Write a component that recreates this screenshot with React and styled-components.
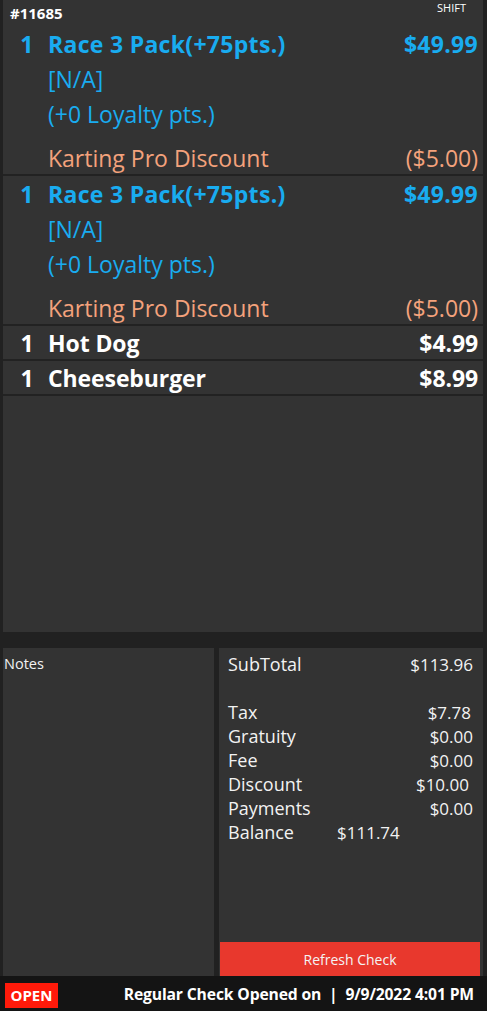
import React from "react";
import styled, { createGlobalStyle } from "styled-components";

const Global = createGlobalStyle`
  html, body { margin: 0; padding: 0; background: #212121; }
  body { font-family: "Open Sans", "Noto Sans", sans-serif; }
  * { box-sizing: border-box; }
`;

const Page = styled.div`
  width: 487px;
  height: 1011px;
  display: flex;
  flex-direction: column;
  background: #212121;
  overflow: hidden;
`;

const TicketPanel = styled.div`
  height: 632px;
  margin: 0 4px 0 3px;
  background: #333333;
  display: flex;
  flex-direction: column;
`;

const Header = styled.div`
  height: 26px;
  display: flex;
  justify-content: space-between;
  align-items: flex-start;
  padding: 0 17px 0 7px;
  color: #ffffff;
`;

const CheckNo = styled.div`
  font-weight: 700;
  font-size: 15px;
  line-height: 15px;
  margin-top: 6px;
`;

const Shift = styled.div`
  font-size: 11px;
  line-height: 11px;
  margin-top: 2px;
`;

const Item = styled.div`
  border-bottom: 2px solid #222222;
  display: flex;
  flex-direction: column;
`;

const Line = styled.div`
  height: ${(p) => p.$h || 35}px;
  display: grid;
  grid-template-columns: 45px 1fr auto;
  align-items: center;
  padding-right: 5px;
  color: ${(p) => p.$color};
  font-size: 23px;
  font-weight: ${(p) => (p.$bold ? 700 : 400)};
  letter-spacing: ${(p) => p.$ls || 0}px;
  margin-top: ${(p) => p.$mt || 0}px;
  white-space: nowrap;
`;

const Qty = styled.span`
  text-align: center;
  padding-left: 3px;
`;

const Price = styled.span`
  text-align: right;
`;

const Bottom = styled.div`
  display: flex;
  gap: 5px;
  margin: 16px 4px 0 3px;
  height: 328px;
`;

const Notes = styled.div`
  width: 211px;
  background: #333333;
  color: #f2f2f2;
  font-size: 14.5px;
  padding: 6px 1px;
`;

const Summary = styled.div`
  flex: 1;
  background: #333333;
  display: flex;
  flex-direction: column;
  color: #f2f2f2;
`;

const SumRows = styled.div`
  flex: 1;
  padding: 4px 10px 0 9px;
`;

const SumRow = styled.div`
  display: flex;
  align-items: center;
  height: 24px;
  margin-bottom: ${(p) => p.$mb || 0}px;
`;

const SumLabel = styled.span`
  font-size: 18px;
  width: ${(p) => (p.$narrow ? "109px" : "auto")};
  flex: ${(p) => (p.$narrow ? "none" : "1")};
`;

const SumValue = styled.span`
  font-size: 17px;
  padding-right: ${(p) => p.$pr || 0}px;
`;

const RefreshButton = styled.button`
  height: 34px;
  margin: 0 3px 0 1px;
  border: none;
  background: #e8382d;
  color: #f4f4f4;
  font-family: inherit;
  font-size: 14px;
  padding: 0;
`;

const Footer = styled.div`
  height: 35px;
  background: #141414;
  display: flex;
  align-items: center;
  justify-content: space-between;
  padding: 0 13px 0 5px;
`;

const OpenBadge = styled.div`
  background: #ff1a0a;
  color: #ffffff;
  font-weight: 700;
  font-size: 15px;
  height: 25px;
  width: 53px;
  display: flex;
  align-items: center;
  justify-content: center;
  margin-top: 3px;
`;

const FooterText = styled.div`
  color: #ffffff;
  font-weight: 700;
  font-size: 15.7px;
  letter-spacing: -0.15px;
  white-space: pre;
`;

const BLUE = "#19acf0";
const ORANGE = "#f4a27c";
const WHITE = "#ffffff";

function RaceItem() {
  return (
    <Item>
      <Line $bold $ls={0.3} $color={BLUE}>
        <Qty>1</Qty>
        <span>Race 3 Pack(+75pts.)</span>
        <Price>$49.99</Price>
      </Line>
      <Line $color={BLUE}>
        <span />
        <span>[N/A]</span>
        <span />
      </Line>
      <Line $color={BLUE}>
        <span />
        <span>(+0 Loyalty pts.)</span>
        <span />
      </Line>
      <Line $color={ORANGE} $mt={10} $h={33}>
        <span />
        <span>Karting Pro Discount</span>
        <Price>($5.00)</Price>
      </Line>
    </Item>
  );
}

function SimpleItem({ name, price }) {
  return (
    <Item>
      <Line $bold $ls={-0.1} $color={WHITE} $h={33}>
        <Qty>1</Qty>
        <span>{name}</span>
        <Price>{price}</Price>
      </Line>
    </Item>
  );
}

export default function App() {
  return (
    <>
      <Global />
      <Page>
        <TicketPanel>
          <Header>
            <CheckNo>#11685</CheckNo>
            <Shift>SHIFT</Shift>
          </Header>
          <RaceItem />
          <RaceItem />
          <SimpleItem name="Hot Dog" price="$4.99" />
          <SimpleItem name="Cheeseburger" price="$8.99" />
        </TicketPanel>
        <Bottom>
          <Notes>Notes</Notes>
          <Summary>
            <SumRows>
              <SumRow $mb={24}>
                <SumLabel>SubTotal</SumLabel>
                <SumValue>$113.96</SumValue>
              </SumRow>
              <SumRow>
                <SumLabel>Tax</SumLabel>
                <SumValue $pr={2}>$7.78</SumValue>
              </SumRow>
              <SumRow>
                <SumLabel>Gratuity</SumLabel>
                <SumValue>$0.00</SumValue>
              </SumRow>
              <SumRow>
                <SumLabel>Fee</SumLabel>
                <SumValue>$0.00</SumValue>
              </SumRow>
              <SumRow>
                <SumLabel>Discount</SumLabel>
                <SumValue $pr={4}>$10.00</SumValue>
              </SumRow>
              <SumRow>
                <SumLabel>Payments</SumLabel>
                <SumValue>$0.00</SumValue>
              </SumRow>
              <SumRow>
                <SumLabel $narrow>Balance</SumLabel>
                <SumValue>$111.74</SumValue>
              </SumRow>
            </SumRows>
            <RefreshButton>Refresh Check</RefreshButton>
          </Summary>
        </Bottom>
        <Footer>
          <OpenBadge>OPEN</OpenBadge>
          <FooterText>Regular Check Opened on  |  9/9/2022 4:01 PM</FooterText>
        </Footer>
      </Page>
    </>
  );
}
